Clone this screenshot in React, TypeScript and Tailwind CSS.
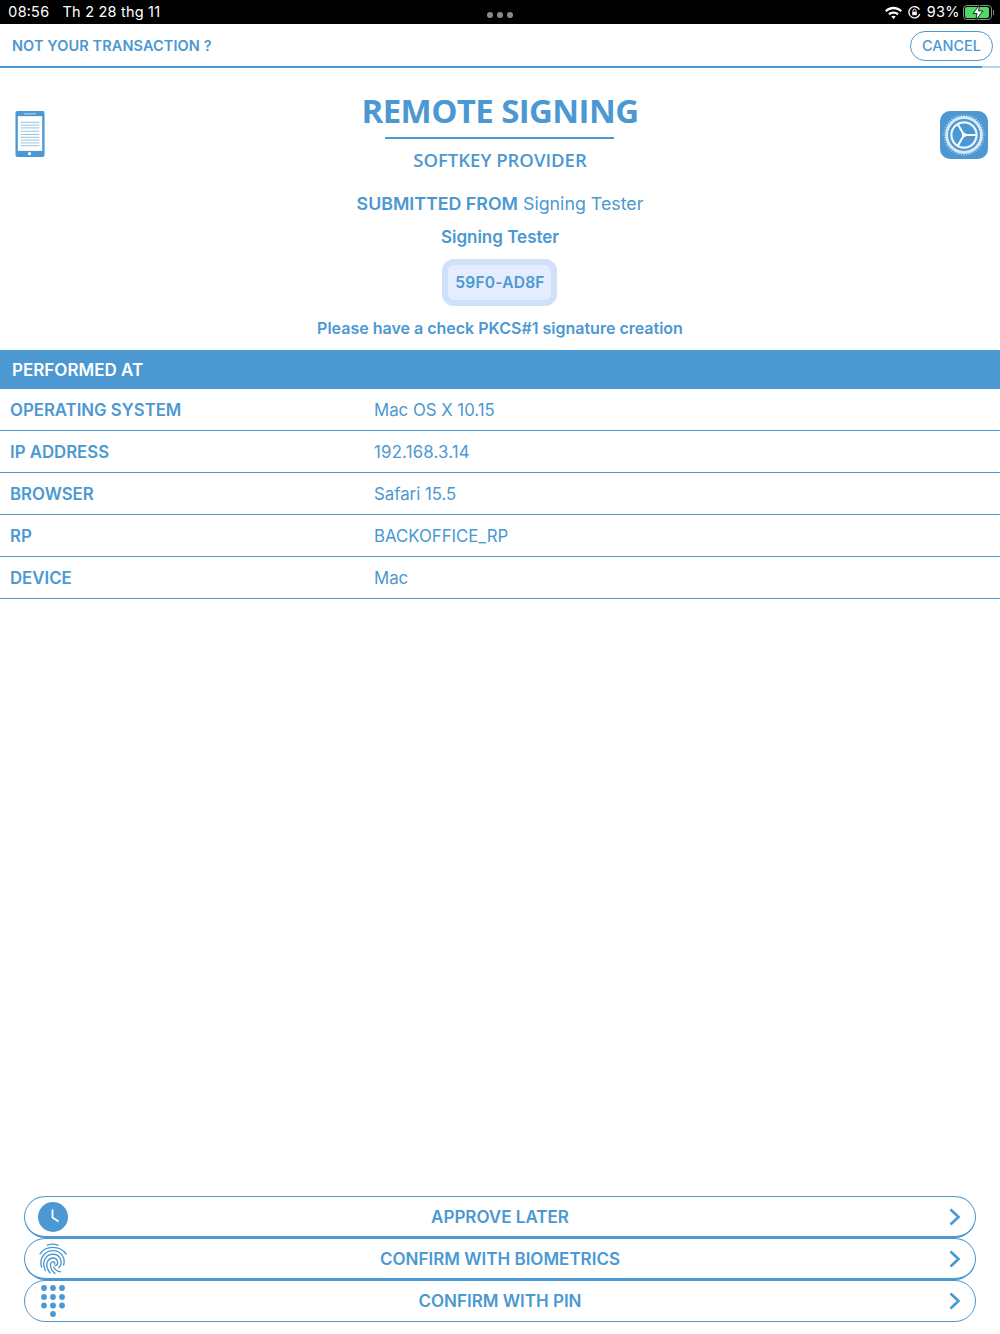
import React from "react";

const Tablet = () => (
  <svg width="30" height="48" viewBox="0 0 32 50">
    <rect x="0.5" y="0.5" width="31" height="49" rx="2" fill="#4b98d2" />
    <rect x="3" y="6" width="26" height="37" fill="#fff" />
    <rect x="10" y="3" width="12" height="1" fill="#cfe3f3" />
    <circle cx="15.5" cy="46" r="1.7" fill="#fff" />
    {[12, 15, 18, 21.5, 25, 28, 31, 34, 37].map((y) => (
      <rect key={y} x="6" y={y} width="20" height="1" fill="#8fbfe3" />
    ))}
  </svg>
);

const Gear = () => {
  const teeth = Array.from({ length: 48 }, (_, i) => i * 7.5);
  return (
    <svg width="48" height="48" viewBox="0 0 48 48">
      <rect width="48" height="48" rx="10" fill="#4b98d2" />
      <circle cx="24" cy="24" r="17.4" fill="none" stroke="#d9e9f6" strokeWidth="3" />
      {teeth.map((a) => (
        <rect key={a} x="23.5" y="3.4" width="1" height="2" fill="#a9cfeb" transform={`rotate(${a} 24 24)`} />
      ))}
      <circle cx="24" cy="24" r="12.6" fill="none" stroke="#eef6fb" strokeWidth="2.2" />
      <circle cx="24" cy="24" r="2.2" fill="#fff" />
      <path d="M24 24H36M24 24L18 13.6M24 24L18 34.4" stroke="#fff" strokeWidth="2" fill="none" />
    </svg>
  );
};

const Clock = () => (
  <svg width="30" height="30" viewBox="0 0 30 30">
    <circle cx="15" cy="15" r="15" fill="#4b98d2" />
    <path d="M14.5 7.5V15.5L20.5 19.5" stroke="#fff" strokeWidth="1.8" fill="none" />
  </svg>
);

const Fingerprint = () => (
  <svg width="28" height="32" viewBox="0 0 28 32" fill="none" stroke="#4b98d2" strokeWidth="1.35" strokeLinecap="round">
    <path d="M8.5 2.2C11.5 0.9 16 0.9 19 2.2" />
    <path d="M1 11C4 6.2 9 4.4 13.8 4.4C18.6 4.4 23.8 6.4 27 11" />
    <path d="M2.6 24C1.4 20 1.6 15.6 4.4 12.2C7 9 10.6 7.6 14 7.6C18 7.6 21.6 9.6 23.6 13C25.2 15.8 25.6 19 24.6 22" />
    <path d="M6.4 27.6C4.6 23.6 3.8 18.6 6.6 14.8C8.6 12.2 11 11.2 14 11.2C17.4 11.2 20.2 13 21.4 16C22.6 19 22.2 22.4 20 24.6" />
    <path d="M11 30C8.4 26.6 6.8 21.6 8.8 18C10 15.8 11.8 15 14 15C16.6 15 18.4 17 18.6 19.2C18.8 21 17.8 22.4 16.2 22.6" />
    <path d="M16 30.4C13.4 28.4 10.8 24.4 11.6 20.8C12 19.2 13 18.6 14.2 18.6C15.6 18.6 16.2 20 15.4 21" />
    <path d="M21.6 28.8C18.8 28.6 16.2 27 14.8 24.2" />
  </svg>
);

const Keypad = () => (
  <svg width="26" height="32" viewBox="0 0 26 32" fill="#4b98d2">
    {[3, 12, 21].flatMap((cx) => [3, 12, 20.5].map((cy) => <circle key={`${cx}-${cy}`} cx={cx + 1} cy={cy} r="2.9" />))}
    <circle cx="13" cy="29" r="2.9" />
  </svg>
);

const Chevron = () => (
  <svg width="12" height="18" viewBox="0 0 12 18" fill="none" stroke="#4b98d2" strokeWidth="2.6">
    <path d="M1.5 1.5L9.5 9L1.5 16.5" />
  </svg>
);

const rows = [
  { k: "OPERATING SYSTEM", v: "Mac OS X 10.15", cls: "" },
  { k: "IP ADDRESS", v: "192.168.3.14", cls: "tracking-[0.2px]" },
  { k: "BROWSER", v: "Safari 15.5", cls: "" },
  { k: "RP", v: "BACKOFFICE_RP", cls: "" },
  { k: "DEVICE", v: "Mac", cls: "" },
];

const actions: [string, React.ReactNode][] = [
  ["APPROVE LATER", <Clock />],
  ["CONFIRM WITH BIOMETRICS", <Fingerprint />],
  ["CONFIRM WITH PIN", <Keypad />],
];

export default function App() {
  return (
    <div className="flex h-[1334px] w-[1000px] flex-col overflow-hidden bg-white font-['Inter','Liberation_Sans',sans-serif] text-[#4b98d2]">
      <div className="relative flex h-6 shrink-0 items-center justify-between bg-black pl-2 pr-[6px] text-[14.5px] text-white">
        <div className="flex gap-[13px]">
          <span className="tabular-nums">08:56</span>
          <span className="tracking-[0.2px]">Th 2 28 thg 11</span>
        </div>
        <div className="absolute left-[487px] top-3 flex gap-1">
          <div className="h-[6px] w-[6px] rounded-full bg-[#8a8a8a]" />
          <div className="h-[6px] w-[6px] rounded-full bg-[#8a8a8a]" />
          <div className="h-[6px] w-[6px] rounded-full bg-[#8a8a8a]" />
        </div>
        <div className="flex items-center">
          <svg width="17" height="13" viewBox="0 0 17 13" fill="white">
            <path d="M0 4.4C4.6 -0.6 12.4 -0.6 17 4.4L15.4 6C11.6 2.2 5.4 2.2 1.6 6Z" />
            <path d="M3.2 7.6C6 4.8 11 4.8 13.8 7.6L12.2 9.2C10.2 7.4 6.8 7.4 4.8 9.2Z" />
            <path d="M6.3 10.6C7.4 9.6 9.6 9.6 10.7 10.6L8.5 13Z" />
          </svg>
          <svg width="13" height="13" viewBox="0 0 13 13" fill="none" stroke="white" className="ml-[6px]">
            <path d="M11.8 8A5.6 5.6 0 1 1 11.4 3.6" strokeWidth="1.3" />
            <rect x="4.2" y="5.6" width="4.6" height="3.6" fill="white" stroke="none" />
            <path d="M5 5.6V4.6A1.5 1.5 0 0 1 8 4.6V5.6" strokeWidth="0.9" />
          </svg>
          <span className="ml-[6px] w-[33px] tabular-nums">93%</span>
          <div className="ml-[3px] flex items-center">
            <div className="relative flex h-[15px] w-[29px] rounded-[4px] border border-[#8a8a8a] p-[1px]">
              <div className="h-full w-[24px] rounded-[2px] bg-[#4cd964]" />
              <svg width="12" height="15" viewBox="0 0 12 15" className="absolute left-[8px] top-[-1px]">
                <path d="M7.5 0L1 8.5H5L3.8 15L11 6H6.6Z" fill="white" stroke="black" strokeWidth="0.8" />
              </svg>
            </div>
            <div className="ml-[1px] h-[5px] w-[1.5px] bg-[#8a8a8a]" />
          </div>
        </div>
      </div>

      <div className="flex h-[42px] shrink-0 items-center justify-between pl-3 pr-[7px] pt-px">
        <span className="text-[14.5px] font-semibold tracking-[0.1px]">NOT YOUR TRANSACTION ?</span>
        <div className="flex h-[30px] w-[83px] items-center justify-center rounded-full border border-[#4b98d2] text-[14.5px] font-medium">
          CANCEL
        </div>
      </div>
      <div className="h-[2px] shrink-0 bg-[#b3d8f3]">
        <div className="h-full w-[982px] bg-[#4b98d2]" />
      </div>

      <div className="flex h-[282px] shrink-0 items-start justify-between pl-3 pr-3">
        <div className="mt-[42px] w-12 pl-[3px]">
          <Tablet />
        </div>
        <div className="flex flex-col items-center">
          <div className="mt-[21px] font-['Open_Sans',sans-serif] text-[33px] font-bold leading-[44px] tracking-[-0.6px]">REMOTE SIGNING</div>
          <div className="mt-1 h-[2px] w-[229px] bg-[#4b98d2]" />
          <div className="mt-[9px] font-['Open_Sans',sans-serif] text-[18.5px] font-semibold leading-6">SOFTKEY PROVIDER</div>
          <div className="mt-5 text-[17.8px] leading-6">
            <span className="font-semibold">SUBMITTED FROM</span> Signing Tester
          </div>
          <div className="mt-[9px] text-[17px] font-semibold leading-6">Signing Tester</div>
          <div className="mt-[10px] flex h-[47px] w-[115px] items-center justify-center rounded-[12px] border-[6px] border-[#d0e0fb] bg-[#e3edfd] pt-px text-[15.5px] font-semibold tracking-[0.25px]">
            59F0-AD8F
          </div>
          <div className="mt-[10px] text-[16px] font-semibold leading-6">Please have a check PKCS#1 signature creation</div>
        </div>
        <div className="mt-[43px]">
          <Gear />
        </div>
      </div>

      <div className="flex h-[39px] shrink-0 items-center bg-[#4b98d2] pl-3 pt-[2px] text-[17px] font-semibold text-white">PERFORMED AT</div>

      <div className="shrink-0">
        {rows.map(({ k, v, cls }) => (
          <div key={k} className="flex h-[42px] items-center border-b border-[#4b98d2] pl-[10px] pt-[2px] text-[16.8px]">
            <span className="w-[364px] font-semibold">{k}</span>
            <span className={cls}>{v}</span>
          </div>
        ))}
      </div>

      <div className="flex-1" />

      <div className="flex shrink-0 flex-col px-6 pb-3">
        {actions.map(([label, icon], i) => (
          <div
            key={label}
            className={`relative flex h-[42px] items-center justify-center rounded-[21px] border border-[#4b98d2] pt-[2px] text-[17px] font-semibold ${i < 2 ? "border-b-2" : ""}`}
          >
            <div className="absolute left-[13px] top-1/2 flex w-[30px] -translate-y-1/2 justify-center">{icon}</div>
            {label}
            <div className="absolute right-[14px] top-1/2 flex -translate-y-1/2">
              <Chevron />
            </div>
          </div>
        ))}
      </div>
    </div>
  );
}
